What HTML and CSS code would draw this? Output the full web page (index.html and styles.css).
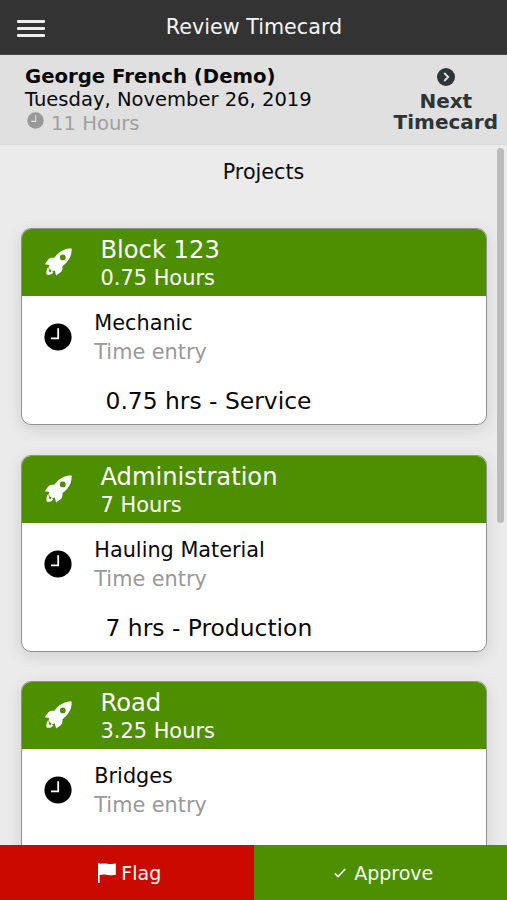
FILE: index.html
```html
<!DOCTYPE html>
<html lang="en">
<head>
<meta charset="utf-8">
<title>Review Timecard</title>
<link rel="stylesheet" href="styles.css">
</head>
<body>
<svg class="defs" width="0" height="0" aria-hidden="true">
  <symbol id="rocket" viewBox="0 0 28 28">
    <path fill-rule="evenodd" d="M27.600.4C22.500.3 16.800 2.200 12.800 6.800L10.300 9.800C7.500 9.500 5.400 10 4.200 11.400L.8 16.200l4.600.8-1 2.600 3.800 3.800 2.600-1 1.300 5.200 4.600-3.400c1.500-1.200 2-3.200 1.700-6l3.200-2.800C25.800 11.500 28 6.400 27.600.4zM18.800 6.500a2.900 2.900 0 1 1 0 5.800 2.900 2.900 0 0 1 0-5.800z"/>
    <path d="M3.800 19.800c-1.500 1.600-1.500 4-1.200 6.700 2.600.5 5.300.2 6.500-2.100l-1.500-1.300-1.400 1.300-1.700-1.900 1-1.100z"/>
  </symbol>
  <symbol id="clock" viewBox="0 0 28 28">
    <circle cx="14" cy="14" r="13.600"/>
    <path d="M14.200 5.200v10.200H7" fill="none" stroke="var(--hands)" stroke-width="1.800"/>
  </symbol>
</svg>
<div class="app">
  <header class="topbar">
    <div class="menu"><i></i><i></i><i></i></div>
    <h1>Review Timecard</h1>
  </header>
  <section class="summary">
    <div class="person">
      <strong>George French (Demo)</strong>
      <span class="date">Tuesday, November 26, 2019</span>
      <span class="total"><svg><use href="#clock"/></svg><span>11 Hours</span></span>
    </div>
    <div class="next">
      <svg viewBox="0 0 18 18"><circle cx="9" cy="9" r="9"/><path d="M7.200 5l4 4-4 4" fill="none" stroke="#e0e0e0" stroke-width="1.900"/></svg>
      <span>Next<br>Timecard</span>
    </div>
  </section>
  <main class="content">
    <div class="scrollbar"></div>
    <h2>Projects</h2>
    <article class="card">
      <div class="head"><svg><use href="#rocket"/></svg><div><h3>Block 123</h3><p>0.75 Hours</p></div></div>
      <div class="entry"><svg><use href="#clock"/></svg><div><p>Mechanic</p><p class="muted">Time entry</p></div></div>
      <p class="hours">0.75 hrs - Service</p>
    </article>
    <article class="card">
      <div class="head"><svg><use href="#rocket"/></svg><div><h3>Administration</h3><p>7 Hours</p></div></div>
      <div class="entry"><svg><use href="#clock"/></svg><div><p>Hauling Material</p><p class="muted">Time entry</p></div></div>
      <p class="hours">7 hrs - Production</p>
    </article>
    <article class="card">
      <div class="head"><svg><use href="#rocket"/></svg><div><h3>Road</h3><p>3.25 Hours</p></div></div>
      <div class="entry"><svg><use href="#clock"/></svg><div><p>Bridges</p><p class="muted">Time entry</p></div></div>
    </article>
  </main>
  <footer class="actions">
    <div class="flag"><svg viewBox="0 0 18 20"><path d="M0 0h1.600v1C7-.6 11 2 17.800.6v11.200C11 13.200 7 10.200 1.600 12v8H0z"/></svg><span>Flag</span></div>
    <div class="approve"><svg viewBox="0 0 12 10"><path d="M.8 5.400l3.300 3.200L11.200 1" fill="none" stroke="#fff" stroke-width="1.600"/></svg><span>Approve</span></div>
  </footer>
</div>
</body>
</html>
```
FILE: styles.css
```css
* { box-sizing: border-box; }
body { margin: 0; font-family: "DejaVu Sans", sans-serif; color: #080808; }
h1, h2, h3, p { margin: 0; font-weight: 400; }
svg { display: block; flex: none; }
.defs { position: absolute; }
.app { height: 900px; display: flex; flex-direction: column; overflow: hidden; background: #ebebeb; }

.topbar { height: 55px; flex: none; display: grid; grid-template-columns: 47px 1fr 46px; align-items: center; background: #333; color: #f5f5f5; border-bottom: 1px solid #484848; }
.topbar h1 { text-align: center; font-size: 20.700px; line-height: 26px; }
.menu { display: flex; flex-direction: column; gap: 4px; margin: 2px 0 0 17px; width: 28px; }
.menu i { height: 3px; border-radius: 1px; background: #eee; }

.summary { height: 90px; flex: none; display: flex; justify-content: space-between; padding: 10px 9px 0 25px; background: #e0e0e0; border-bottom: 1px solid #d8d8d8; }
.person { display: flex; flex-direction: column; }
.person strong { font-size: 19.700px; line-height: 23px; }
.date { font-size: 19.550px; line-height: 23px; }
.total { --hands: #e0e0e0; display: flex; font-size: 19.600px; line-height: 26px; color: #a0a0a0; fill: #999; }
.total svg { width: 17px; height: 17px; margin: 1px 7px 0 2px; }
.next { display: flex; flex-direction: column; align-items: center; text-align: center; font-size: 20px; font-weight: 700; line-height: 20.500px; color: #2f3436; fill: #2f3436; }
.next svg { width: 18px; height: 18px; margin: 3px 0 5px; }

.content { flex: 1; min-height: 0; overflow: hidden; position: relative; padding: 14px 20px 0 21px; }
.content h2 { text-align: center; padding-left: 19px; font-size: 20.700px; line-height: 26px; margin-bottom: 43px; }
.scrollbar { position: absolute; top: 3px; right: 3px; width: 7px; height: 375px; border-radius: 4px; background: #bbb; }

.card { height: 197px; margin-bottom: 29.600px; border: 1px solid #929292; border-radius: 10px; overflow: hidden; background: #fff; box-shadow: 0 4px 16px rgba(0, 0, 0, .12); }
.head { height: 67px; display: flex; background: #4d8f00; color: #fff; fill: #fff; padding: 6px 0 0 21.500px; }
.head svg { width: 28px; height: 28px; margin: 13px 29px 0 0; }
.head h3 { font-size: 24.200px; line-height: 31px; }
.head p { font-size: 20.900px; line-height: 24px; }
.entry { --hands: #fff; display: flex; padding: 13px 0 0 21.500px; font-size: 20.800px; line-height: 29px; fill: #000; }
.entry svg { width: 28px; height: 28px; margin: 14px 22.800px 0 0; }
.muted { color: #999; }
.hours { margin: 19px 0 0 83.500px; font-size: 23.400px; line-height: 30px; }

.actions { height: 55px; flex: none; display: grid; grid-template-columns: 1fr 1fr; font-size: 19px; color: #f8f8f8; fill: #fff; }
.actions div { display: flex; align-items: center; justify-content: center; }
.flag { background: #ca0a00; gap: 5px; padding-left: 6px; }
.approve { background: #4d8f00; gap: 8px; padding-left: 7px; }
.flag svg { width: 18px; height: 20px; }
.approve svg { width: 12px; height: 10px; }
```
